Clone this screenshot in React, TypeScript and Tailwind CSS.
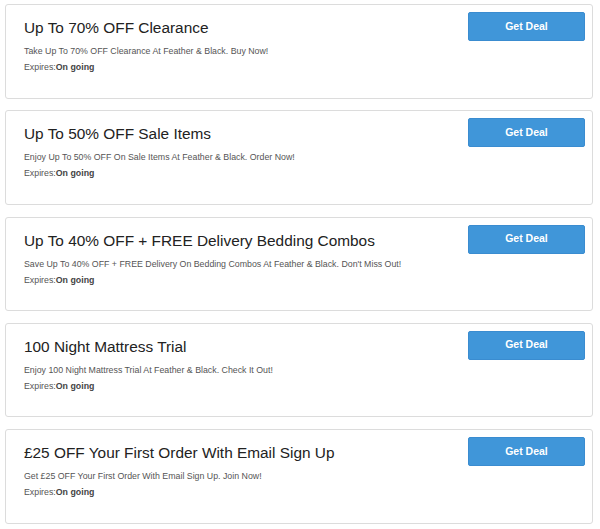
import React from "react";

const deals = [
  { title: "Up To 70% OFF Clearance", desc: "Take Up To 70% OFF Clearance At Feather & Black. Buy Now!" },
  { title: "Up To 50% OFF Sale Items", desc: "Enjoy Up To 50% OFF On Sale Items At Feather & Black. Order Now!" },
  { title: "Up To 40% OFF + FREE Delivery Bedding Combos", desc: "Save Up To 40% OFF + FREE Delivery On Bedding Combos At Feather & Black. Don't Miss Out!" },
  { title: "100 Night Mattress Trial", desc: "Enjoy 100 Night Mattress Trial At Feather & Black. Check It Out!" },
  { title: "£25 OFF Your First Order With Email Sign Up", desc: "Get £25 OFF Your First Order With Email Sign Up. Join Now!" },
];

export default function App() {
  return (
    <div
      className="w-[600px] h-[529px] bg-white pt-[4px] pl-[5px] flex flex-col gap-[11.75px]"
      style={{ fontFamily: '"Liberation Sans", Arial, sans-serif' }}
    >
      {deals.map((d) => (
        <div
          key={d.title}
          className="w-[588px] h-[94.5px] shrink-0 border border-[#dcdcdc] rounded-[3px] flex justify-between"
        >
          <div className="pl-[18px] pt-[13px]">
            <div className="text-[15.4px] leading-[20px] text-[#222]">{d.title}</div>
            <div className="mt-[6px] text-[8.8px] leading-[15px] text-[#555]">{d.desc}</div>
            <div className="text-[8.8px] leading-[16px] text-[#555]">
              Expires:<span className="font-bold text-[#444]">On going</span>
            </div>
          </div>
          <div className="pt-[7px] pr-[7px]">
            <button className="w-[117px] h-[29px] bg-[#4096d9] border border-[#3a8cd0] rounded-[2px] text-white text-[10.5px] font-bold">
              Get Deal
            </button>
          </div>
        </div>
      ))}
    </div>
  );
}
